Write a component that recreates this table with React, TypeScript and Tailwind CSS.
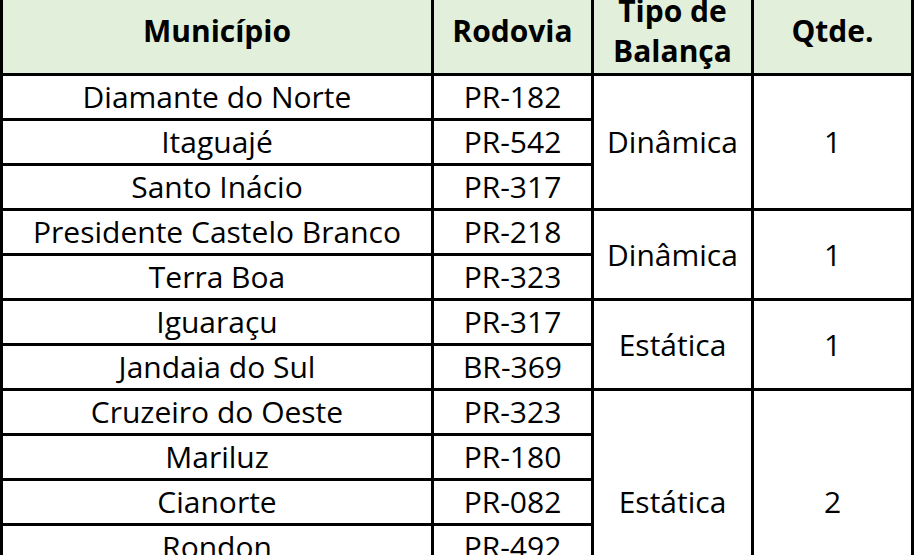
import React from "react";

type Row = { m: string; r: string; t?: string; q?: string; span?: number };

const rows: Row[] = [
  { m: "Diamante do Norte", r: "PR-182", t: "Dinâmica", q: "1", span: 3 },
  { m: "Itaguajé", r: "PR-542" },
  { m: "Santo Inácio", r: "PR-317" },
  { m: "Presidente Castelo Branco", r: "PR-218", t: "Dinâmica", q: "1", span: 2 },
  { m: "Terra Boa", r: "PR-323" },
  { m: "Iguaraçu", r: "PR-317", t: "Estática", q: "1", span: 2 },
  { m: "Jandaia do Sul", r: "BR-369" },
  { m: "Cruzeiro do Oeste", r: "PR-323", t: "Estática", q: "2", span: 5 },
  { m: "Mariluz", r: "PR-180" },
  { m: "Cianorte", r: "PR-082" },
  { m: "Rondon", r: "PR-492" },
  { m: "", r: "" },
];

const base = "border-[3px] border-black text-center align-middle p-0";
const cell = `${base} leading-none`;

export default function App() {
  return (
    <div className="w-[915px] h-[555px] overflow-hidden bg-white">
      <table
        className="table-fixed border-collapse w-[914px] -mt-[14px] text-black text-[30px]"
        style={{ fontFamily: '"Open Sans", "Noto Sans", sans-serif' }}
      >
        <colgroup>
          <col className="w-[431px]" />
          <col className="w-[160px]" />
          <col className="w-[160px]" />
          <col className="w-[160px]" />
        </colgroup>
        <thead>
          <tr className="h-[87px] bg-[#e2efda]">
            <th className={`${cell} font-bold`}>Município</th>
            <th className={`${cell} font-bold`}>Rodovia</th>
            <th className={`${base} font-bold leading-[40px]`}>
              Tipo de
              <br />
              Balança
            </th>
            <th className={`${cell} font-bold`}>Qtde.</th>
          </tr>
        </thead>
        <tbody>
          {rows.map((row, i) => (
            <tr key={i} className="h-[45px]">
              <td className={cell}>{row.m}</td>
              <td className={cell}>{row.r}</td>
              {row.t !== undefined && (
                <>
                  <td className={cell} rowSpan={row.span}>
                    {row.t}
                  </td>
                  <td className={cell} rowSpan={row.span}>
                    {row.q}
                  </td>
                </>
              )}
            </tr>
          ))}
        </tbody>
      </table>
    </div>
  );
}
